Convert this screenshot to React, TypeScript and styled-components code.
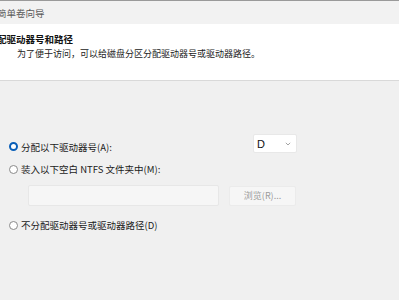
import styled, { createGlobalStyle } from "styled-components";

const GlobalStyle = createGlobalStyle`
  html, body {
    margin: 0;
    padding: 0;
    background: #f0f0f0;
  }
  body {
    font-family: "Noto Sans CJK SC", "Noto Sans", sans-serif;
    color: #1b1b1b;
    overflow: hidden;
  }
`;

const StyledWindow = styled.div`
  width: 399px;
  height: 300px;
  display: flex;
  flex-direction: column;
  background: #f0f0f0;
  border-top: 1px solid #9a9a9a;
  box-sizing: border-box;
  overflow: hidden;
`;

const StyledTitleBar = styled.div`
  height: 23px;
  display: flex;
  align-items: center;
  background: #f2f2f2;
  font-size: 9.5px;
  color: #5a5a5a;

  span {
    margin-left: -3px;
    margin-top: 1px;
  }
`;

const StyledHeader = styled.header`
  height: 57px;
  background: #ffffff;
  border-bottom: 1px solid #d9d9d9;
  display: flex;
  flex-direction: column;
  padding-top: 8px;
  box-sizing: border-box;
`;

const StyledHeading = styled.h1`
  margin: 0 0 0 -3px;
  font-size: 9.5px;
  font-weight: 700;
  line-height: 14px;
  color: #111;
`;

const StyledSubtitle = styled.p`
  margin: 1px 0 0 17px;
  font-size: 9px;
  line-height: 13px;
  color: #222;
`;

const StyledBody = styled.main`
  display: flex;
  flex-direction: column;
  padding-top: 53px;
`;

const StyledRow = styled.div<{ $gap?: number; $indent?: number; $mt?: number }>`
  display: flex;
  align-items: center;
  gap: ${(p) => p.$gap ?? 0}px;
  margin-left: ${(p) => p.$indent ?? 0}px;
  margin-top: ${(p) => p.$mt ?? 0}px;
`;

const StyledOption = styled.label<{ $width?: number; $nudge?: number }>`
  display: flex;
  align-items: center;
  gap: 3px;
  margin-left: 9px;
  width: ${(p) => (p.$width ? `${p.$width}px` : "auto")};
  height: 12px;
  margin-top: ${(p) => p.$nudge ?? 0}px;
  font-size: 9.5px;
  line-height: 12px;
  color: #1b1b1b;
`;

const StyledRadio = styled.span<{ $checked?: boolean }>`
  width: 9px;
  height: 9px;
  border-radius: 50%;
  box-sizing: border-box;
  flex-shrink: 0;
  background: #fff;
  border: ${(p) => (p.$checked ? "2.5px solid #0a5fb8" : "1px solid #8a8a8a")};
`;

const StyledSelect = styled.div`
  width: 44px;
  height: 19px;
  box-sizing: border-box;
  background: #fff;
  border: 1px solid #e8e8e8;
  border-radius: 2px;
  display: flex;
  align-items: center;
  justify-content: space-between;
  padding: 0 5px 0 3px;
  font-family: "Liberation Sans", "Noto Sans", sans-serif;
  font-size: 11px;
  color: #111;
`;

const StyledInput = styled.div`
  width: 191px;
  height: 21px;
  box-sizing: border-box;
  background: #f6f6f6;
  border: 1px solid #e7e7e7;
  border-radius: 2px;
`;

const StyledButton = styled.button`
  width: 67px;
  height: 20px;
  box-sizing: border-box;
  background: #f6f6f6;
  border: 1px solid #ebebeb;
  border-radius: 2px;
  font-family: "Noto Sans CJK SC", "Noto Sans", sans-serif;
  font-size: 9px;
  color: #9b9b9b;
  padding: 0;
`;

const Chevron = () => (
  <svg width="6" height="4" viewBox="0 0 6 4">
    <path d="M0.8 0.8 L3 3 L5.2 0.8" fill="none" stroke="#9a9a9a" strokeWidth="0.9" />
  </svg>
);

const App = () => {
  return (
    <>
      <GlobalStyle />
      <StyledWindow>
        <StyledTitleBar>
          <span>简单卷向导</span>
        </StyledTitleBar>
        <StyledHeader>
          <StyledHeading>配驱动器号和路径</StyledHeading>
          <StyledSubtitle>为了便于访问，可以给磁盘分区分配驱动器号或驱动器路径。</StyledSubtitle>
        </StyledHeader>
        <StyledBody>
          <StyledRow>
            <StyledOption $width={244} $nudge={6}>
              <StyledRadio $checked />
              分配以下驱动器号(A):
            </StyledOption>
            <StyledSelect>
              D
              <Chevron />
            </StyledSelect>
          </StyledRow>
          <StyledRow $mt={10}>
            <StyledOption>
              <StyledRadio />
              装入以下空白 NTFS 文件夹中(M):
            </StyledOption>
          </StyledRow>
          <StyledRow $indent={28} $gap={10} $mt={10}>
            <StyledInput />
            <StyledButton>浏览(R)...</StyledButton>
          </StyledRow>
          <StyledRow $mt={13}>
            <StyledOption>
              <StyledRadio />
              不分配驱动器号或驱动器路径(D)
            </StyledOption>
          </StyledRow>
        </StyledBody>
      </StyledWindow>
    </>
  );
};

export default App;
